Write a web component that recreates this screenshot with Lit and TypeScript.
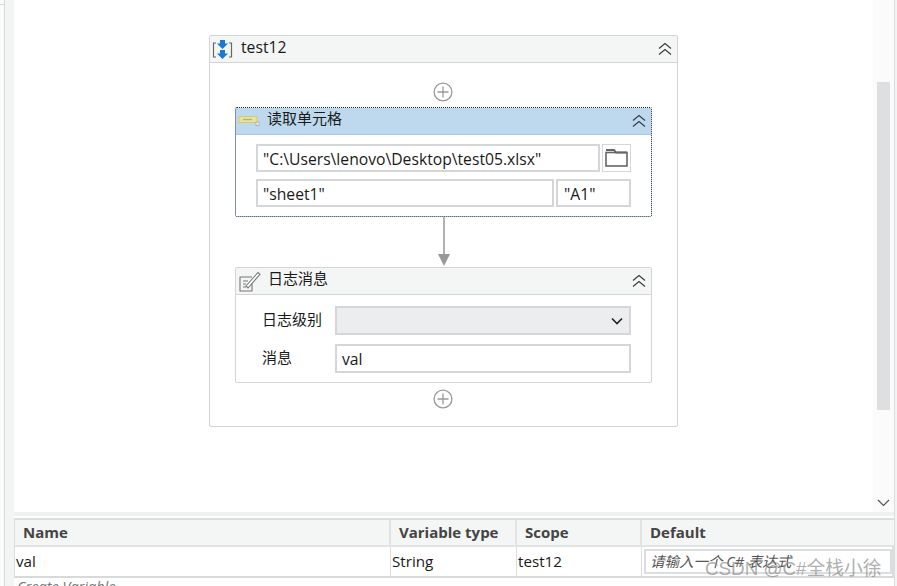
import { LitElement, html, css } from "lit";
import { customElement } from "lit/decorators.js";

const chevrons = html`<svg class="chev" width="14" height="14" viewBox="0 0 14 14" fill="none" stroke="#3c3c3c" stroke-width="1.2"><path d="M1 6.5 7 1.5l6 5"/><path d="M1 12.5 7 7.5l6 5"/></svg>`;
const plus = html`<svg class="plus" width="20" height="20" viewBox="0 0 20 20" fill="none" stroke="#9a9a9a" stroke-width="1.3"><circle cx="10" cy="10" r="8.9"/><path d="M10 4.5v11M4.5 10h11"/></svg>`;

@customElement("app-root")
export class AppRoot extends LitElement {
  static styles = css`
    :host { display: block; width: 897px; height: 586px; overflow: hidden; background: #fff; position: relative;
      font-family: "Open Sans", "Noto Sans CJK SC", sans-serif; color: #1a1a1a; font-size: 15px; }
    * { box-sizing: border-box; }
    .page { display: flex; height: 586px; }
    .left { width: 14px; flex: none; display: flex; background: #f3f4f4; }
    .left .edge { width: 5px; background: #fbfbfb; border-right: 1px solid #d8d8d8; }
    .right-edge { width: 3px; flex: none; background: #f4f4f4; border-left: 1px solid #dcdcdc; }
    .content { flex: 1; min-width: 0; display: flex; flex-direction: column; }
    .top { height: 512px; display: flex; flex: none; }
    .canvas { flex: 1; min-width: 0; padding-top: 35px; display: flex; flex-direction: column; align-items: center; }
    .scroll { width: 21px; flex: none; background: #fbfbfb; padding: 82px 4px 0; display: flex; flex-direction: column; }
    .thumb { height: 328px; width: 13px; background: #dedfe1; }
    .down { margin: auto 0 5px; align-self: center; }
    .card { border: 1px solid #d3d4d5; border-radius: 2px; background: #fff; }
    .outer { width: 469px; height: 392px; display: flex; flex-direction: column; }
    .head { display: flex; align-items: center; background: #f4f5f5; border-bottom: 1px solid #d3d4d5; }
    .outer > .head { height: 27px; padding: 0 5px 0 2px; }
    .outer .title { font-size: 15.7px; margin-left: 8px; flex: 1; line-height: 20px; padding-bottom: 5px; }
    .body { display: flex; flex-direction: column; align-items: center; padding-top: 19px; }
    .plus { display: block; flex: none; margin-right: 2px; }
    .read { width: 417px; height: 110px; margin-top: 5px; border: 1px dotted #06223c; border-radius: 2px; }
    .read .head { height: 27px; background: #bed9ee; border-bottom: 1px solid #a3c8e6; padding: 0 5px 0 2px; }
    .name { font-size: 15px; flex: 1; line-height: 20px; padding-bottom: 7px; }
    .read .name { margin-left: 7px; }
    .form { padding: 9px 20px 0; display: flex; flex-direction: column; gap: 7px; }
    .line { display: flex; gap: 2px; height: 28px; }
    .field { border: 2px solid #d5d6d8; height: 28px; display: flex; align-items: center; padding: 2px 5px 0; font-size: 15.7px; background: #fff; min-width: 0; white-space: nowrap; }
    .grow { flex: 1; }
    .a1 { width: 75px; padding-left: 6px; }
    .folder { width: 29px; flex: none; border: 1px solid #d5d7dc; display: flex; align-items: center; justify-content: center; }
    .arrow { display: block; flex: none; }
    .log { width: 417px; height: 116px; }
    .log .head { height: 27px; padding: 0 5px 0 2px; }
    .log .name { margin-left: 7px; padding-bottom: 7px; }
    .rows { padding: 11px 20px 0 26px; display: flex; flex-direction: column; gap: 9px; }
    .row { display: flex; align-items: center; height: 29px; }
    .row label { width: 73px; font-size: 15px; flex: none; line-height: 20px; padding-bottom: 3px; }
    .select { flex: 1; height: 29px; background: #ecedef; border: 2px solid #d5d6d8; display: flex; align-items: center; justify-content: flex-end; padding-right: 6px; }
    .val { flex: 1; height: 29px; padding-top: 1px; }
    .p2 { margin-top: 6px; }
    .gap { height: 4px; flex: none; background: #f0f0f0; }
    .table { flex: none; margin-top: 2px; display: grid; grid-template-columns: 376px 126px 125px 252px; border-top: 2px solid #dcdddd; border-left: 1px solid #dcdddd; border-right: 2px solid #dcdddd; }
    .th { height: 27px; background: #f4f5f5; border-right: 2px solid #e2e3e3; border-bottom: 2px solid #e2e3e3; display: flex; align-items: center; padding: 0 0 2px 8px; font-weight: 700; font-size: 15px; color: #444; }
    .th:nth-child(4) { border-right: 0; }
    .td { height: 31px; border-right: 1px solid #dcdddd; border-bottom: 2px solid #d8d9d9; display: flex; align-items: center; padding: 0 0 2px 1px; font-size: 15.2px; }
    .td.last { border-right: 0; padding: 2px; align-items: stretch; }
    .expr { flex: 1; border: 2px solid #dcdde0; display: flex; align-items: center; padding: 0 0 2px 4px; font-style: italic; font-size: 14.5px; color: #555; white-space: nowrap; }
    .create { padding-left: 3px; font-style: italic; font-size: 14.5px; color: #777; height: 20px; line-height: 18px; }
    .mark { position: absolute; left: 705px; top: 553px; font-size: 18.8px; color: rgba(140,140,140,.7); white-space: nowrap; font-family: "Liberation Sans", "Noto Sans CJK SC", sans-serif; }
    .tick { position: absolute; left: 0; top: 4px; width: 5px; height: 1px; background: #d8d8d8; }
  `;

  render() {
    return html`
      <div class="page">
        <div class="left"><div class="edge"></div></div>
        <div class="content">
          <div class="top">
            <div class="canvas">
              <div class="card outer">
                <div class="head">
                  <svg width="21" height="21" viewBox="0 0 21 21" fill="none">
                    <path d="M4 4H1.5v14H4M17 4h2.5v14H17" stroke="#666" stroke-width="1.2"/>
                    <path d="M8 1h5v3.5h3L10.5 10 5 4.5h3z" fill="#1c78d6"/>
                    <path d="M8 11h5v3.5h3L10.5 20 5 14.5h3z" fill="#1c78d6"/>
                  </svg>
                  <span class="title">test12</span>${chevrons}
                </div>
                <div class="body">
                  ${plus}
                  <div class="read">
                    <div class="head">
                      <svg width="22" height="12" viewBox="0 0 22 12">
                        <rect x="1" y="1.5" width="18" height="6" fill="#e8e49a" stroke="#cfc97a" stroke-width="1"/>
                        <path d="M5 4.5h9" stroke="#b3b387" stroke-width="1.4"/>
                        <rect x="18" y="7" width="3" height="3.5" fill="#eee" stroke="#aaa" stroke-width=".8"/>
                      </svg>
                      <span class="name">读取单元格</span>${chevrons}
                    </div>
                    <div class="form">
                      <div class="line">
                        <div class="field grow">"C:\\Users\\lenovo\\Desktop\\test05.xlsx"</div>
                        <div class="folder">
                          <svg width="23" height="18" viewBox="0 0 23 18" fill="none">
                            <path d="M1 1h8l2 2.5h11" stroke="#666" stroke-width="2"/>
                            <rect x="1" y="3.5" width="21" height="13.5" stroke="#666" stroke-width="1.6"/>
                          </svg>
                        </div>
                      </div>
                      <div class="line">
                        <div class="field grow">"sheet1"</div>
                        <div class="field a1">"A1"</div>
                      </div>
                    </div>
                  </div>
                  <svg class="arrow" width="14" height="50" viewBox="0 0 14 50">
                    <path d="M7 0v38" stroke="#999" stroke-width="1.5"/>
                    <path d="M1 37h12l-6 12z" fill="#999"/>
                  </svg>
                  <div class="card log">
                    <div class="head">
                      <svg width="23" height="21" viewBox="0 0 23 21" fill="none" stroke="#777" stroke-width="1.1">
                        <path d="M14 6H2v14h12v-8"/>
                        <path d="M5 10h5M5 13h3M5 16h3"/>
                        <path d="M8 15 20 1.5l2 1.8L10 17z" fill="#fff"/>
                      </svg>
                      <span class="name">日志消息</span>${chevrons}
                    </div>
                    <div class="rows">
                      <div class="row"><label>日志级别</label>
                        <div class="select"><svg width="12" height="8" viewBox="0 0 12 8" fill="none" stroke="#222" stroke-width="1.6"><path d="M1 1.5l5 5 5-5"/></svg></div>
                      </div>
                      <div class="row"><label>消息</label><div class="field val">val</div></div>
                    </div>
                  </div>
                  <div class="p2">${plus}</div>
                </div>
              </div>
            </div>
            <div class="scroll">
              <div class="thumb"></div>
              <svg class="down" width="13" height="8" viewBox="0 0 13 8" fill="none" stroke="#555" stroke-width="1.2"><path d="M1 1l5.5 5.5L12 1"/></svg>
            </div>
          </div>
          <div class="gap"></div>
          <div class="table">
            <div class="th">Name</div><div class="th">Variable type</div><div class="th">Scope</div><div class="th">Default</div>
            <div class="td">val</div><div class="td">String</div><div class="td">test12</div>
            <div class="td last"><div class="expr">请输入一个 C# 表达式</div></div>
          </div>
          <div class="create">Create Variable</div>
        </div>
        <div class="right-edge"></div>
      </div>
      <div class="tick"></div>
      <div class="mark">CSDN @C#全栈小徐</div>
    `;
  }
}
